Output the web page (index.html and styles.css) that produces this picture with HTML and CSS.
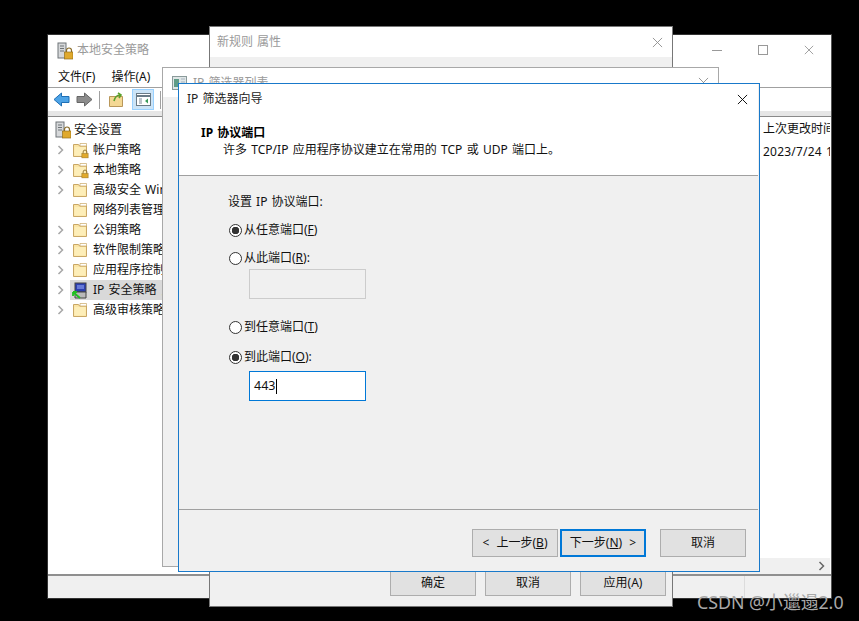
FILE: index.html
```html
<!DOCTYPE html>
<html lang="zh">
<head>
<meta charset="utf-8">
<title>IP 筛选器向导</title>
<link rel="stylesheet" href="styles.css">
</head>
<body>
<svg class="defs" width="0" height="0">
  <defs>
    <symbol id="folder" viewBox="0 0 16 16">
      <path d="M1.5 14.5V2.5h5l1 1.5h7v10.5z" fill="#fbe5a6" stroke="#c9a765"/>
      <path d="M2.5 13.5V5h11v8.5z" fill="#fdeeb9"/>
      <path d="M8 1.5h6.5V4H8z" fill="#fff" stroke="#c9a765" stroke-width=".7"/>
    </symbol>
    <symbol id="lock" viewBox="0 0 16 16">
      <path d="M5 8V5.5a3 3 0 0 1 6 0V8" fill="none" stroke="#8a6d2a" stroke-width="1.4"/>
      <rect x="3" y="8" width="10" height="7" fill="#e0a92c" stroke="#94701c" stroke-width=".8"/>
    </symbol>
    <symbol id="chev" viewBox="0 0 8 10">
      <path d="M1.5 1l4 4-4 4" fill="none" stroke="currentColor" stroke-width="1.5"/>
    </symbol>
    <symbol id="close" viewBox="0 0 12 12">
      <path d="M1 1l10 10M11 1L1 11" fill="none" stroke="currentColor" stroke-width="1"/>
    </symbol>
    <symbol id="server" viewBox="0 0 16 18">
      <rect x="1" y="1" width="8" height="15" fill="#d6d8da" stroke="#6f7478"/>
      <path d="M3 4h4M3 6.500h4M3 9h4" stroke="#6f7478"/>
      <path d="M9.500 10V8.500a2.500 2.500 0 0 1 5 0V10" fill="none" stroke="#8a6d2a" stroke-width="1.200"/>
      <rect x="7.500" y="10" width="8.500" height="7" fill="#e0a92c" stroke="#94701c" stroke-width=".7"/>
    </symbol>
  </defs>
</svg>

<section class="win main-win">
  <header class="titlebar main-title">
    <svg class="title-icon" width="16" height="18"><use href="#server"/></svg>
    <span class="title-text">本地安全策略</span>
    <span class="caps">
      <svg width="10" height="10" viewBox="0 0 10 10"><path d="M0 5.500h10" stroke="#999"/></svg>
      <svg width="10" height="10" viewBox="0 0 10 10"><rect x=".5" y=".5" width="9" height="9" fill="none" stroke="#999"/></svg>
      <svg class="cap-x" width="10" height="10"><use href="#close"/></svg>
    </span>
  </header>
  <nav class="menubar"><span>文件(F)</span><span>操作(A)</span></nav>
  <div class="toolbar">
    <svg width="17" height="15" viewBox="0 0 17 15"><path d="M1 7.500L8.500 1v3.500H16v6H8.500V14z" fill="#4da3e6" stroke="#1f6fb5"/></svg>
    <svg class="fwd" width="17" height="15" viewBox="0 0 17 15"><path d="M16 7.500L8.500 1v3.500H1v6h7.500V14z" fill="#8c8c8c" stroke="#666"/></svg>
    <i class="tb-sep"></i>
    <svg class="up" width="15" height="15" viewBox="0 0 15 15"><path d="M.5 14.500V4.500h13v10z" fill="#f4d894" stroke="#b9975a"/><path d="M5 9c1-4 3-6 6-6M9 1l3 2-2 3" fill="none" stroke="#5aa02c" stroke-width="1.600"/></svg>
    <span class="tb-active"><svg width="15" height="13" viewBox="0 0 15 13"><rect x=".5" y=".5" width="14" height="12" fill="#fff" stroke="#6a7a86"/><path d="M.5 3h14" stroke="#6a7a86" stroke-width="2"/><path d="M3 6h3M3 8h3M3 10h3" stroke="#7a8a96"/><path d="M12 5.500v5l-3-2.500z" fill="#3a9a5a"/></svg></span>
    <i class="tb-sep"></i>
  </div>
  <div class="strip"></div>
  <div class="panes">
    <ul class="tree">
      <li class="tree-root"><svg width="16" height="18"><use href="#server"/></svg><span>安全设置</span></li>
      <li><svg class="chev" width="8" height="10"><use href="#chev"/></svg><span class="fold"><svg width="16" height="16"><use href="#folder"/></svg><svg class="badge" width="10" height="11"><use href="#lock"/></svg></span><span>帐户策略</span></li>
      <li><svg class="chev" width="8" height="10"><use href="#chev"/></svg><span class="fold"><svg width="16" height="16"><use href="#folder"/></svg><svg class="badge" width="10" height="11"><use href="#lock"/></svg></span><span>本地策略</span></li>
      <li><svg class="chev" width="8" height="10"><use href="#chev"/></svg><span class="fold"><svg width="16" height="16"><use href="#folder"/></svg></span><span>高级安全 Windows 防火墙</span></li>
      <li><i class="chev-gap"></i><span class="fold"><svg width="16" height="16"><use href="#folder"/></svg></span><span>网络列表管理器策略</span></li>
      <li><svg class="chev" width="8" height="10"><use href="#chev"/></svg><span class="fold"><svg width="16" height="16"><use href="#folder"/></svg></span><span>公钥策略</span></li>
      <li><svg class="chev" width="8" height="10"><use href="#chev"/></svg><span class="fold"><svg width="16" height="16"><use href="#folder"/></svg></span><span>软件限制策略</span></li>
      <li><svg class="chev" width="8" height="10"><use href="#chev"/></svg><span class="fold"><svg width="16" height="16"><use href="#folder"/></svg></span><span>应用程序控制策略</span></li>
      <li class="selected"><svg class="chev" width="8" height="10"><use href="#chev"/></svg><span class="fold"><svg width="16" height="18" viewBox="0 0 16 18"><rect x="3" y="1" width="11" height="9" fill="#2c3fb0" stroke="#444"/><path d="M5 4h7M5 6h7" stroke="#9fb4ff"/><path d="M3 10h11v6H3z" fill="#b9b9b9" stroke="#444"/><path d="M1 10l7 6M1 10v4M1 10h4" fill="none" stroke="#1fc01f" stroke-width="1.800"/></svg></span><span>IP 安全策略 ，在本地计算机</span></li>
      <li><svg class="chev" width="8" height="10"><use href="#chev"/></svg><span class="fold"><svg width="16" height="16"><use href="#folder"/></svg></span><span>高级审核策略配置</span></li>
    </ul>
    <div class="list">
      <div class="list-head">上次更改时间</div>
      <div class="list-row">2023/7/24 14:00</div>
      <div class="hscroll"><svg width="8" height="10"><use href="#chev"/></svg></div>
    </div>
  </div>
  <footer class="statusbar"><i></i></footer>
</section>

<section class="win prop-win">
  <header class="titlebar prop-title">
    <span class="title-text">新规则 属性</span>
    <svg class="cap-x" width="11" height="11"><use href="#close"/></svg>
  </header>
  <div class="prop-body">
    <div class="prop-page"></div>
    <div class="prop-actions">
      <button class="btn">确定</button>
      <button class="btn">取消</button>
      <button class="btn">应用(A)</button>
    </div>
  </div>
</section>

<section class="win list-win">
  <header class="titlebar list-title">
    <svg width="15" height="14" viewBox="0 0 15 14"><rect x=".5" y=".5" width="14" height="13" fill="#dfe6e6" stroke="#8a9a9a"/><rect x="2" y="3" width="5" height="8" fill="#5f9b87"/><path d="M9 3h4M9 6h4M9 9h4" stroke="#a8b4c0"/></svg>
    <span class="title-text">IP 筛选器列表</span>
    <svg class="cap-x" width="11" height="11"><use href="#close"/></svg>
  </header>
</section>

<section class="win wizard">
  <header class="wiz-head">
    <div class="wiz-title"><span>IP 筛选器向导</span><svg width="11" height="11"><use href="#close"/></svg></div>
    <h1>IP 协议端口</h1>
    <p>许多 TCP/IP 应用程序协议建立在常用的 TCP 或 UDP 端口上。</p>
  </header>
  <div class="wiz-body">
    <div class="caption">设置 IP 协议端口:</div>
    <div class="radio on"><i></i><span>从任意端口(<u>F</u>)</span></div>
    <div class="radio second"><i></i><span>从此端口(<u>R</u>):</span></div>
    <div class="field disabled"></div>
    <div class="radio third"><i></i><span>到任意端口(<u>T</u>)</span></div>
    <div class="radio on fourth"><i></i><span>到此端口(<u>O</u>):</span></div>
    <div class="field active">443<b class="caret"></b></div>
  </div>
  <footer class="wiz-foot">
    <button class="btn">&lt; 上一步(<u>B</u>)</button>
    <button class="btn primary">下一步(<u>N</u>) &gt;</button>
    <button class="btn cancel">取消</button>
  </footer>
</section>

<div class="watermark">CSDN @小邋遢2.0</div>
</body>
</html>
```

FILE: styles.css
```css
* { box-sizing: border-box; }
html, body { margin: 0; height: 100%; }
body {
  background: #000;
  overflow: hidden;
  position: relative;
  width: 859px;
  height: 621px;
  font: 12px/16px "Noto Sans", "Noto Sans CJK SC", sans-serif;
  word-spacing: 1px;
  color: #111;
}
svg { display: block; flex: none; }
.defs { position: absolute; }
ul { list-style: none; margin: 0; padding: 0; }
button { font: inherit; color: inherit; }

.win { position: absolute; display: flex; flex-direction: column; background: #fff; overflow: hidden; }
.titlebar { display: flex; align-items: center; flex: none; }
.title-text { color: #9a9a9a; }
.cap-x { color: #8f8f8f; }

/* main window */
.main-win { left: 47px; top: 34px; width: 785px; height: 565px; border: 1px solid #333; border-right-color: #555; }
.main-title { height: 30px; padding: 0 17px 0 9px; gap: 4px; }
.main-title .title-icon { margin-top: 2px; }
.caps { margin-left: auto; display: flex; gap: 36px; }
.menubar { height: 23px; flex: none; display: flex; gap: 16px; padding: 1px 10px 0; align-items: center; border-bottom: 1px solid #a0a0a0; color: #111; }
.toolbar { height: 23px; flex: none; display: flex; align-items: center; padding: 0 5px; gap: 6px; }
.tb-sep { width: 1px; height: 18px; background: #a0a0a0; }
.up { margin-left: 3px; }
.tb-active { width: 22px; height: 21px; display: flex; align-items: center; justify-content: center; background: #cce4f7; border: 1px solid #99d1ff; margin-left: 2px; }
.strip { height: 6px; flex: none; background: #e6e6e6; border-bottom: 1px solid #8a8a8a; }
.panes { flex: 1; display: flex; min-height: 0; border-bottom: 2px solid #8f8f8f; position: relative; padding-right: 1px; }
.tree { width: 400px; flex: none; padding-top: 3px; }
.tree li { height: 20px; display: flex; align-items: center; white-space: nowrap; padding-left: 9px; color: #111; }
.tree .tree-root { padding-left: 7px; gap: 3px; }
.tree .chev { margin-right: 7px; color: #a6a6a6; }
.chev-gap { width: 15px; flex: none; }
.fold { position: relative; width: 16px; height: 16px; margin-right: 5px; flex: none; }
.badge { position: absolute; right: -2px; bottom: -1px; }
.selected { background: linear-gradient(to right, #fff 22px, #d9d9d9 22px); }
.list { flex: 1; position: relative; padding: 4px 0 0 315px; overflow: hidden; white-space: nowrap; }
.list-row { margin-top: 7px; letter-spacing: .2px; }
.hscroll { position: absolute; left: 0; right: 0; bottom: 0; height: 16px; background: #f0f0f0; display: flex; align-items: center; justify-content: flex-end; padding-right: 4px; color: #666; }
.statusbar { height: 22px; flex: none; background: #f0f0f0; display: flex; justify-content: flex-end; }
.statusbar i { width: 87px; border-left: 1px solid #dcdcdc; }

/* properties window */
.prop-win { left: 209px; top: 26px; width: 464px; height: 581px; border: 1px solid #777; }
.prop-title { height: 30px; padding: 0 9px 0 7px; justify-content: space-between; }
.prop-body { flex: 1; background: #f0f0f0; display: flex; flex-direction: column; }
.prop-page { flex: 1; }
.prop-actions { display: flex; justify-content: flex-end; gap: 9px; padding: 0 6px 10px 0; }

/* filter list window */
.list-win { left: 162px; top: 67px; width: 557px; height: 500px; border: 1px solid #a8a8a8; background: #f0f0f0; }
.list-title { height: 29px; background: #fff; padding: 0 9px; gap: 6px; }
.list-title .cap-x { margin-left: auto; }

/* wizard */
.wizard { left: 178px; top: 83px; width: 582px; height: 489px; border: 1px solid #1979ca; background: #f0f0f0; }
.wiz-head { height: 92px; flex: none; background: #fff; border-bottom: 1px solid #a0a0a0; padding: 7px 10px 0 8px; margin-right: 1px; }
.wiz-title { display: flex; justify-content: space-between; align-items: center; height: 16px; color: #222; }
.wiz-title svg { color: #000; }
.wiz-head h1 { margin: 18px 0 0 14px; font-size: 12px; line-height: 16px; font-weight: 700; color: #000; }
.wiz-head p { margin: 1px 0 0 36px; line-height: 16px; word-spacing: 1.2px; }
.wiz-body { flex: 1; padding: 18px 0 0 49px; }
.caption { height: 16px; }
.radio { display: flex; align-items: center; gap: 2px; height: 16px; margin-top: 12px; margin-left: 1px; }
.radio i { width: 13px; height: 13px; border: 1px solid #333; border-radius: 50%; background: #fff; flex: none; }
.radio.on i { background: radial-gradient(circle, #333 0 3.5px, #fff 4px); }
.radio.third { margin-top: 20px; }
.radio.fourth { margin-top: 14px; }
.field { width: 117px; height: 30px; margin-left: 21px; padding: 0 4px; display: flex; align-items: center; }
.field.disabled { border: 1px solid #ccc; margin-top: 3px; }
.field.active { background: #fff; border: 1px solid #0078d7; margin-top: 6px; font-size: 12.5px; }
.caret { width: 1px; height: 15px; background: #000; margin-left: 1px; }
.wiz-foot { height: 62px; flex: none; border-top: 1px solid #a0a0a0; margin-right: 1px; display: flex; justify-content: flex-end; align-items: flex-start; padding: 19px 12px 0 0; gap: 2px; }
.btn { width: 86px; height: 28px; padding: 0; background: #e1e1e1; border: 1px solid #adadad; white-space: nowrap; word-spacing: 4px; }
.prop-actions .btn { height: 26px; }
.primary { border: 2px solid #0078d7; }
.cancel { margin-left: 12px; }

.watermark { position: absolute; left: 697px; top: 591px; font-size: 17.8px; line-height: 22px; word-spacing: 0; color: #a9a9a9; white-space: nowrap; }
```
